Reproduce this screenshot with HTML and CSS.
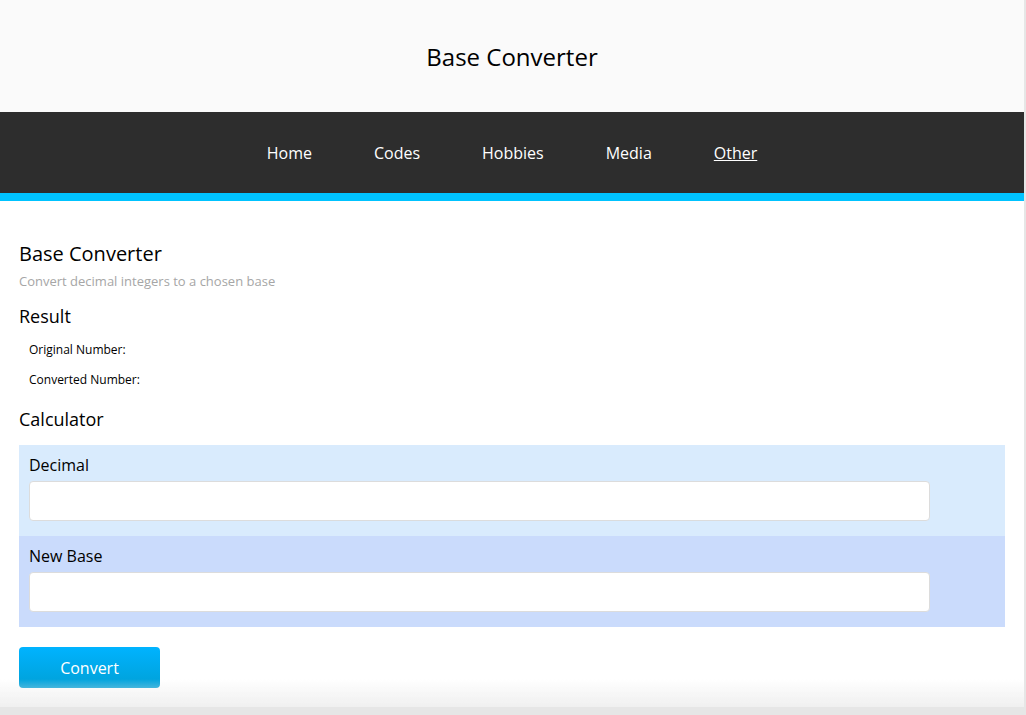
FILE: index.html
```html
<!DOCTYPE html>
<html lang="en">
<head>
<meta charset="utf-8">
<title>Base Converter</title>
<link rel="stylesheet" href="styles.css">
</head>
<body>
<div class="page">
  <header class="site-header">
    <h1 class="site-title">Base Converter</h1>
  </header>
  <nav class="site-nav">
    <a href="#" class="nav-link">Home</a>
    <a href="#" class="nav-link">Codes</a>
    <a href="#" class="nav-link">Hobbies</a>
    <a href="#" class="nav-link">Media</a>
    <a href="#" class="nav-link nav-link--active">Other</a>
  </nav>
  <div class="accent-bar"></div>
  <main class="content">
    <h2 class="page-title">Base Converter</h2>
    <p class="subtitle">Convert decimal integers to a chosen base</p>
    <h3 class="section-title">Result</h3>
    <div class="result-list">
      <p class="result-line">Original Number:</p>
      <p class="result-line">Converted Number:</p>
    </div>
    <h3 class="section-title section-title--calc">Calculator</h3>
    <form class="calc">
      <div class="field field--decimal">
        <label class="field-label">Decimal</label>
        <input class="field-input" type="text">
      </div>
      <div class="field field--base">
        <label class="field-label">New Base</label>
        <input class="field-input" type="text">
      </div>
      <button type="button" class="convert-btn">Convert</button>
    </form>
  </main>
</div>
<div class="bottom-fade"></div>
</body>
</html>
```
FILE: styles.css
```css
html {
  background: #e6e6e6;
}
body {
  margin: 0;
  font-family: "Open Sans", "Noto Sans", sans-serif;
  color: #000;
}
.page {
  width: 1024px;
  min-height: 715px;
  background: #fff;
}
.site-header {
  height: 112px;
  background: #fafafa;
  display: flex;
  align-items: center;
  justify-content: center;
}
.site-title {
  margin: 0;
  font-size: 24px;
  font-weight: 400;
}
.site-nav {
  height: 81px;
  background: #2d2d2d;
  display: flex;
  align-items: center;
  justify-content: center;
  gap: 62px;
}
.nav-link {
  color: #fff;
  text-decoration: none;
  font-size: 16px;
}
.nav-link--active {
  text-decoration: underline;
}
.accent-bar {
  height: 8px;
  background: #00c3ff;
}
.content {
  padding: 40px 19px 0 19px;
}
.page-title {
  margin: 0;
  font-size: 20px;
  font-weight: 400;
  line-height: 26px;
}
.subtitle {
  margin: 4px 0 0;
  font-size: 13px;
  color: #a6a6a6;
  line-height: 20px;
}
.section-title {
  margin: 13px 0 0;
  font-size: 18px;
  font-weight: 400;
  line-height: 24px;
}
.section-title--calc {
  margin-top: 12px;
}
.result-list {
  padding: 7px 0 0 10px;
}
.result-line {
  margin: 0;
  font-size: 12px;
  line-height: 30px;
}
.calc {
  margin-top: 14px;
}
.field {
  width: 986px;
  padding: 10px 10px 15px;
  box-sizing: border-box;
}
.field--decimal {
  background: #d9ebfd;
}
.field--base {
  background: #cadbfc;
}
.field-label {
  display: block;
  font-size: 16px;
  line-height: 20px;
  margin-bottom: 6px;
}
.field-input {
  display: block;
  width: 901px;
  height: 40px;
  box-sizing: border-box;
  border: 1px solid #dcdcdc;
  border-radius: 4px;
  background: #fff;
}
.convert-btn {
  margin-top: 20px;
  width: 141px;
  height: 41px;
  border: none;
  border-radius: 4px;
  background: linear-gradient(#00b3ff, #00a0d6);
  color: #fff;
  font-family: inherit;
  font-size: 16px;
}
.bottom-fade {
  position: fixed;
  left: 0;
  right: 2px;
  bottom: 0;
  height: 36px;
  background: linear-gradient(rgba(240,240,240,0) 0%, rgba(238,238,238,0.9) 78%, #e6e6e6 78%, #e6e6e6 100%);
  pointer-events: none;
}
```
